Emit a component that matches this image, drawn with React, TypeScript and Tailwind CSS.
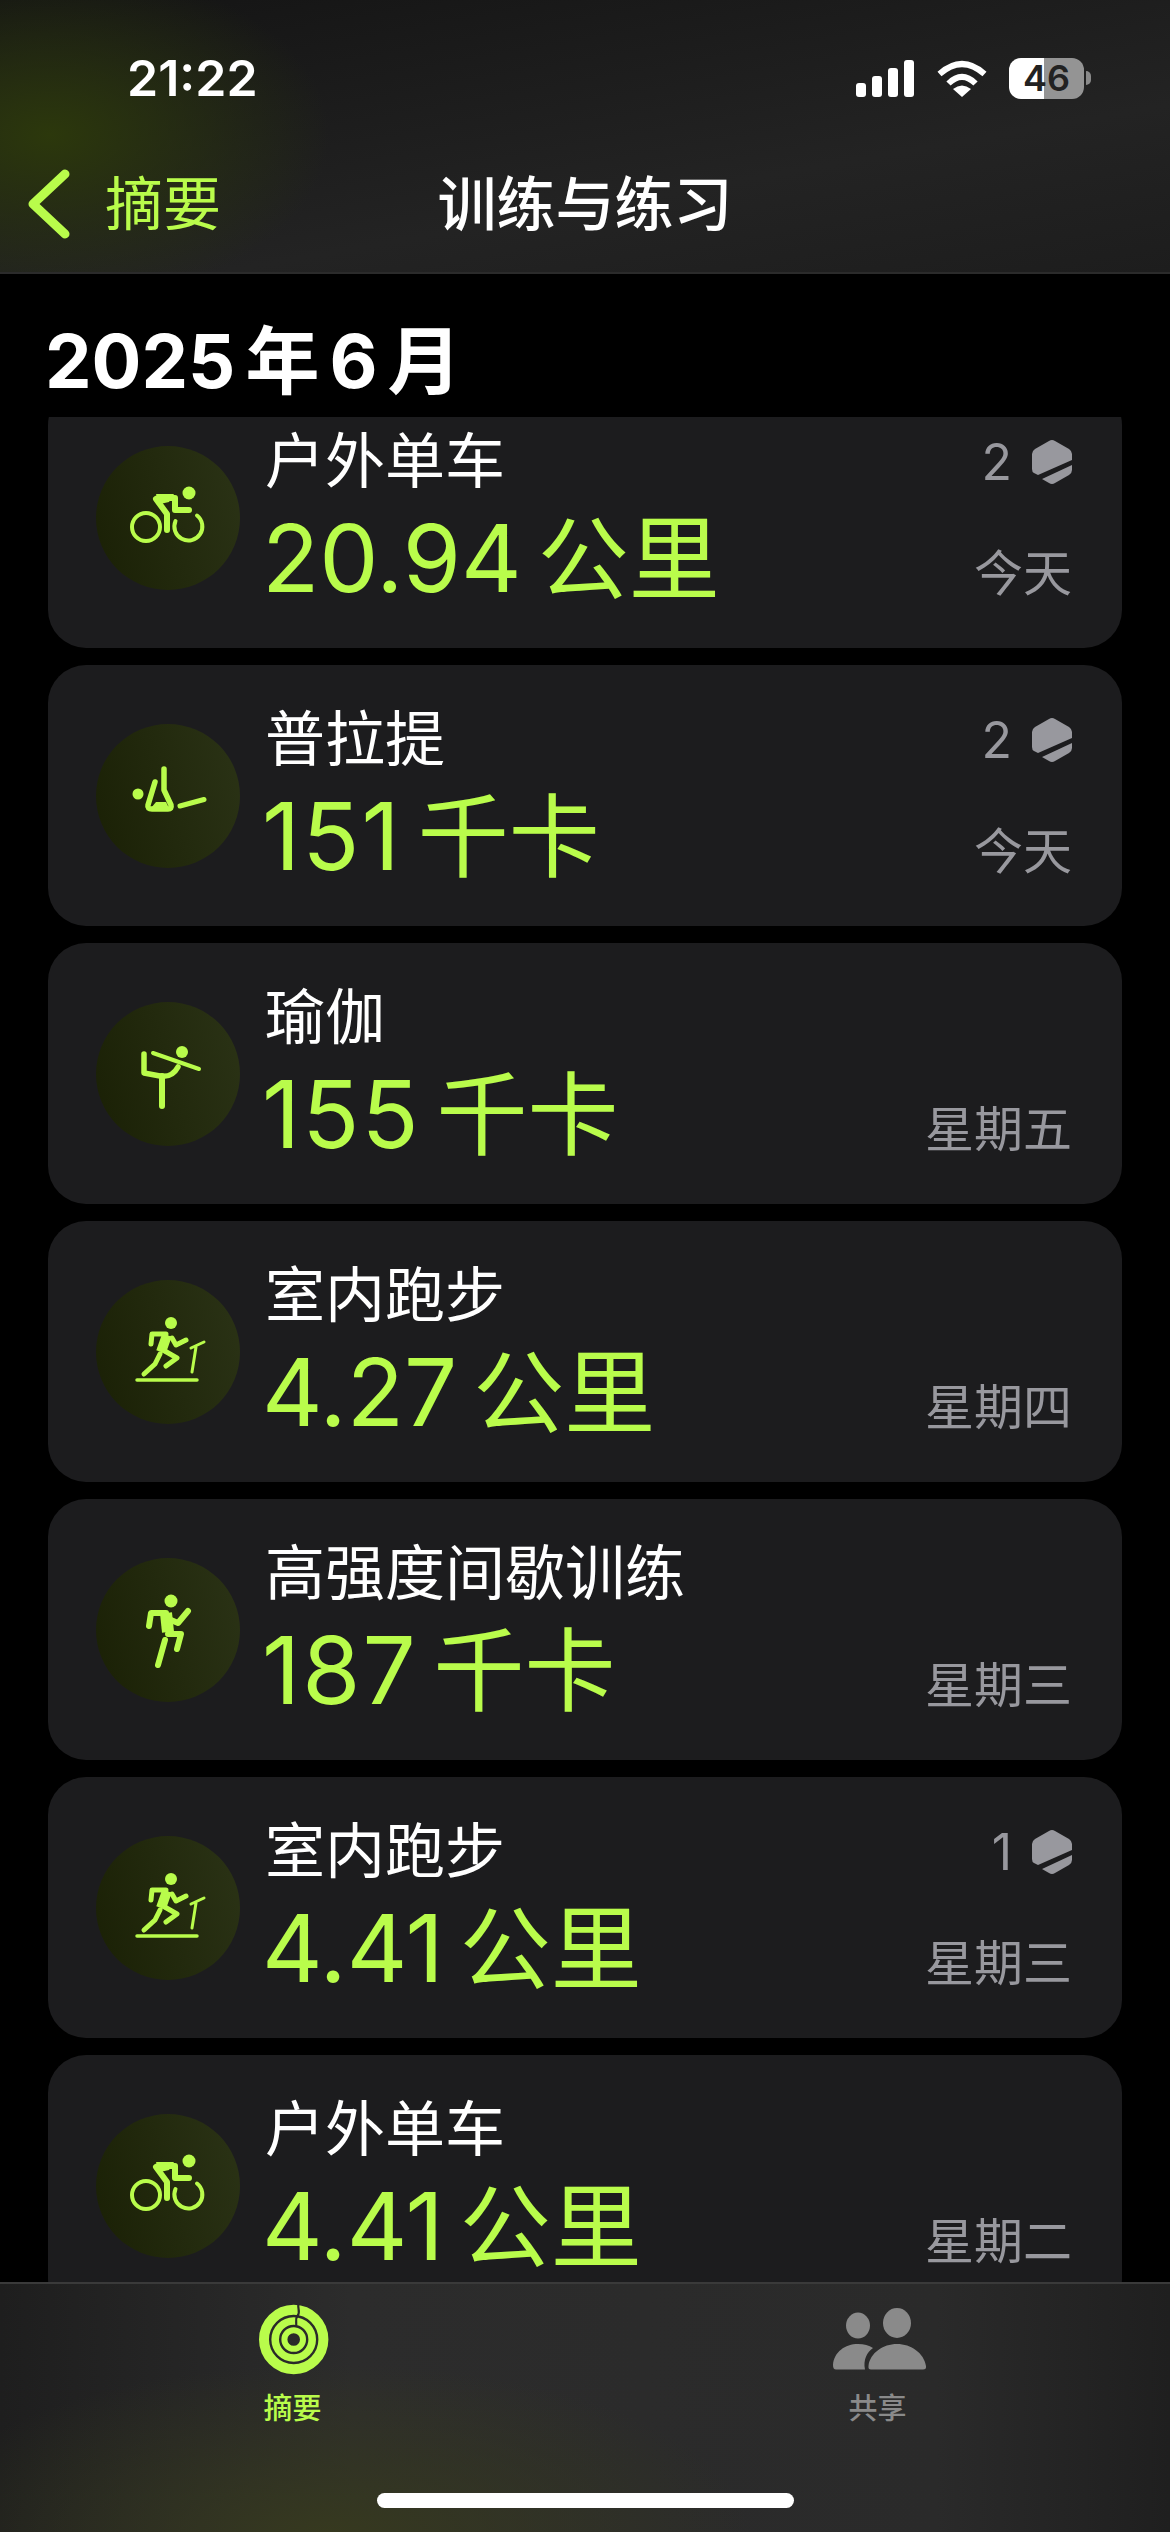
import type { ReactNode } from 'react'

const latin = "font-['Inter','Noto_Sans_CJK_SC',sans-serif]"

function Bike() {
  return (
    <>
      <circle cx="50" cy="81" r="14" fill="none" stroke="#b9fc4b" strokeWidth="4" />
      <path d="M79.5 75A14 14 0 1 0 101 69.5" fill="none" stroke="#b9fc4b" strokeWidth="4" strokeLinecap="round" />
      <circle cx="93" cy="47" r="6.5" fill="#b9fc4b" />
      <path d="M62 52H79V64H93" fill="none" stroke="#b9fc4b" strokeWidth="6" strokeLinecap="round" strokeLinejoin="round" />
      <path d="M60 53L71 68V84" fill="none" stroke="#b9fc4b" strokeWidth="6" strokeLinecap="round" strokeLinejoin="round" />
      <path d="M60 48H78L73 56L64 58Z" fill="#b9fc4b" />
    </>
  )
}

function Pilates() {
  return (
    <>
      <circle cx="42" cy="70" r="5.5" fill="#b9fc4b" />
      <path d="M59 58L52 81Q51 85 56 85H72Q76 85 75 81L68 66V45" fill="none" stroke="#b9fc4b" strokeWidth="5.5" strokeLinecap="round" strokeLinejoin="round" />
      <path d="M55 84L60 78L70 78L74 86H54Z" fill="#b9fc4b" />
      <path d="M84 82L108 75.5" fill="none" stroke="#b9fc4b" strokeWidth="5" strokeLinecap="round" />
    </>
  )
}

function Yoga() {
  return (
    <>
      <circle cx="86" cy="50" r="6" fill="#b9fc4b" />
      <path d="M57 51L103 67" fill="none" stroke="#b9fc4b" strokeWidth="4" strokeLinecap="round" />
      <path d="M48 52V71L64 74Q76 76 82 65" fill="none" stroke="#b9fc4b" strokeWidth="5.5" strokeLinecap="round" strokeLinejoin="round" />
      <path d="M66 74V104" fill="none" stroke="#b9fc4b" strokeWidth="6" strokeLinecap="round" />
    </>
  )
}

function Treadmill() {
  return (
    <>
      <circle cx="75" cy="43" r="6" fill="#b9fc4b" />
      <path d="M41 100H101" fill="none" stroke="#b9fc4b" strokeWidth="3.5" strokeLinecap="round" />
      <path d="M95 68L108 62M100 67L96 92" fill="none" stroke="#b9fc4b" strokeWidth="3" strokeLinecap="round" />
      <path d="M71 55L65 72" fill="none" stroke="#b9fc4b" strokeWidth="10" />
      <path d="M70 54H56L55 64M76 58L80 65L90 60M64 74L59 84L48 94M67 70L81 78L70 86" fill="none" stroke="#b9fc4b" strokeWidth="5" strokeLinecap="round" strokeLinejoin="round" />
    </>
  )
}

function Runner() {
  return (
    <>
      <circle cx="75" cy="43" r="6.5" fill="#b9fc4b" />
      <path d="M70 55L72 74" fill="none" stroke="#b9fc4b" strokeWidth="12" />
      <path d="M70 55H55L53 68M75 62L82 65L92 53M72 76H85L81 91M69 82L62 107" fill="none" stroke="#b9fc4b" strokeWidth="6" strokeLinecap="round" strokeLinejoin="round" />
    </>
  )
}

function ActivityIcon({ children }: { children: ReactNode }) {
  return (
    <div className="w-[144px] h-[144px] shrink-0 rounded-full bg-[linear-gradient(75deg,#1a2005,#2b3316)]">
      <svg viewBox="0 0 144 144" className="w-full h-full">{children}</svg>
    </div>
  )
}

function Hexagon() {
  return (
    <svg viewBox="0 0 40 46" className="w-[40px] h-[46px]">
      <path d="M17 2Q20 0 23 2L37 10Q40 12 40 15V21L6 36L2 34Q0 33 0 30V15Q0 12 3 10Z" fill="#98989e" />
      <path d="M40 26V31Q40 34 37 36L23 44Q20 46 17 44L10 40Z" fill="#98989e" />
    </svg>
  )
}

const workouts = [
  { name: '户外单车', num: '20.94', unit: '公里', day: '今天', count: 2, icon: <Bike /> },
  { name: '普拉提', num: '151', unit: '千卡', day: '今天', count: 2, icon: <Pilates /> },
  { name: '瑜伽', num: '155', unit: '千卡', day: '星期五', icon: <Yoga /> },
  { name: '室内跑步', num: '4.27', unit: '公里', day: '星期四', icon: <Treadmill /> },
  { name: '高强度间歇训练', num: '187', unit: '千卡', day: '星期三', icon: <Runner /> },
  { name: '室内跑步', num: '4.41', unit: '公里', day: '星期三', count: 1, icon: <Treadmill /> },
  { name: '户外单车', num: '4.41', unit: '公里', day: '星期二', icon: <Bike /> },
]

function WorkoutCard({ w }: { w: (typeof workouts)[number] }) {
  return (
    <div className="h-[261px] shrink-0 rounded-[38px] bg-[#1c1c1e] flex items-center pl-[48px] pr-[50px]">
      <ActivityIcon>{w.icon}</ActivityIcon>
      <div className="ml-[25px] flex-1 self-stretch flex flex-col pt-[38px]">
        <div className="text-[60px] leading-[72px] text-white">{w.name}</div>
        <div className="leading-[116px] text-[#b9fc4b] mt-[3px] ml-[-3px] whitespace-nowrap">
          <span className={w.unit === '千卡' ? 'text-[94px] tracking-[2px]' : 'text-[94px]'}>{w.num}</span>
          <span className="text-[91px] ml-[16px]">{w.unit}</span>
        </div>
      </div>
      <div className="self-stretch flex flex-col items-end justify-end relative pb-[44px]">
        {w.count && (
          <div className="absolute right-0 top-[52px] flex items-center gap-[20px] text-[50px] leading-[46px] text-[#98989e]">
            {w.count}
            <Hexagon />
          </div>
        )}
        <div className="text-[49px] leading-[60px] text-[#98989e] whitespace-nowrap">{w.day}</div>
      </div>
    </div>
  )
}

function StatusBar() {
  return (
    <div className="h-[156px] flex items-center justify-between pl-[127px] pr-[79px]">
      <span className="text-[50px] font-semibold text-white">21:22</span>
      <div className="flex items-center">
        <div className="flex items-end gap-[6px] h-[38px]">
          <div className="w-[10px] h-[14px] rounded-[3px] bg-white" />
          <div className="w-[10px] h-[21px] rounded-[3px] bg-white" />
          <div className="w-[10px] h-[29px] rounded-[3px] bg-white" />
          <div className="w-[10px] h-[37px] rounded-[3px] bg-white" />
        </div>
        <svg viewBox="0 0 50 37" className="w-[50px] h-[37px] ml-[23px]">
          <path d="M2.5 14Q25 -6 47.5 14" fill="none" stroke="#fff" strokeWidth="6" />
          <path d="M11.5 23.5Q25 10 38.5 23.5" fill="none" stroke="#fff" strokeWidth="6" />
          <path d="M16 29Q25 22 34 29L25 37Z" fill="#fff" />
        </svg>
        <div className="w-[75px] h-[41px] ml-[22px] rounded-[12px] bg-[linear-gradient(90deg,#fff_47%,#949494_47%)] flex items-center justify-center text-[36px] font-semibold leading-none text-[#222]">
          46
        </div>
        <div className="w-[5px] h-[14px] ml-[2px] rounded-r-full bg-[#8a8a8a]" />
      </div>
    </div>
  )
}

function Header() {
  return (
    <div className="h-[274px] shrink-0 border-b-2 border-[#2b2b2b] bg-[radial-gradient(ellipse_280px_170px_at_50px_135px,#2c380c,transparent),linear-gradient(170deg,#141414,#232323_65%,#1d1d1d)]">
      <StatusBar />
      <div className="h-[96px] grid grid-cols-[1fr_auto_1fr] items-center">
        <div className="flex items-center pl-[28px]">
          <svg viewBox="0 0 42 70" className="w-[42px] h-[70px]">
            <path d="M37 5L5 35L37 65" fill="none" stroke="#b9fc4b" strokeWidth="9" strokeLinecap="round" strokeLinejoin="round" />
          </svg>
          <span className="ml-[35px] text-[58px] leading-none text-[#b9fc4b]">摘要</span>
        </div>
        <div className="text-[59px] leading-none font-medium text-white">训练与练习</div>
        <div />
      </div>
    </div>
  )
}

function TabBar() {
  return (
    <div className="h-[250px] shrink-0 border-t-2 border-[#3a3a3a] relative bg-[radial-gradient(ellipse_420px_170px_at_330px_250px,#36391f,transparent),linear-gradient(90deg,#1e1e1e,#2c2c2c_30%,#2a2a2a_80%,#1f1f1f)]">
      <div className="grid grid-cols-2">
        <div className="flex flex-col items-center pt-[6px] text-[#b9fc4b]">
          <svg viewBox="0 0 100 100" className="w-[100px] h-[100px]">
            <circle cx="50.7" cy="49.5" r="29.7" fill="none" stroke="#b9fc4b" strokeWidth="10" />
            <circle cx="50.7" cy="49.5" r="18.5" fill="none" stroke="#b9fc4b" strokeWidth="7.6" />
            <circle cx="50.7" cy="49.5" r="9.3" fill="none" stroke="#b9fc4b" strokeWidth="6" />
            <path d="M55.5 14C54 19 58 21 54.5 26C51 30 55 33 52.5 37" fill="none" stroke="#292929" strokeWidth="2.2" />
          </svg>
          <span className="text-[29px] leading-[36px] mt-[1px] font-medium">摘要</span>
        </div>
        <div className="flex flex-col items-center pt-[6px] text-[#8a8a8a]">
          <svg viewBox="0 0 110 100" className="w-[110px] h-[100px]" fill="#8a8a8a">
            <ellipse cx="35" cy="35.6" rx="12" ry="13" />
            <ellipse cx="74" cy="33" rx="14" ry="15" />
            <path d="M48 79.5Q45 79.5 45.5 76C47 63 60 54 74 54C88 54 101 63 103 76Q103.5 79.5 100 79.5Z" />
            <path d="M13 79.5Q10 79.5 10 75C11 62 22 54 35 54C41 54 46 55.5 50 58C44 62 40 70 42 79.5Z" />
          </svg>
          <span className="text-[29px] leading-[36px] mt-[1px] font-medium">共享</span>
        </div>
      </div>
      <div className="absolute left-[377px] bottom-[24px] w-[417px] h-[15px] rounded-full bg-white" />
    </div>
  )
}

export default function App() {
  return (
    <div className={`w-[1170px] h-[2532px] bg-black flex flex-col overflow-hidden ${latin}`}>
      <Header />
      <div className="h-[143px] shrink-0 pl-[45px] flex items-end pb-[11px]">
        <h1 className="text-[74px] leading-[90px] font-bold text-white flex gap-[10px]">
          <span>2025</span>
          <span>年</span>
          <span>6</span>
          <span>月</span>
        </h1>
      </div>
      <div className="flex-1 min-h-0 overflow-hidden px-[48px]">
        <div className="flex flex-col gap-[17px] mt-[-30px]">
          {workouts.map((w, i) => (
            <WorkoutCard key={i} w={w} />
          ))}
        </div>
      </div>
      <TabBar />
    </div>
  )
}
